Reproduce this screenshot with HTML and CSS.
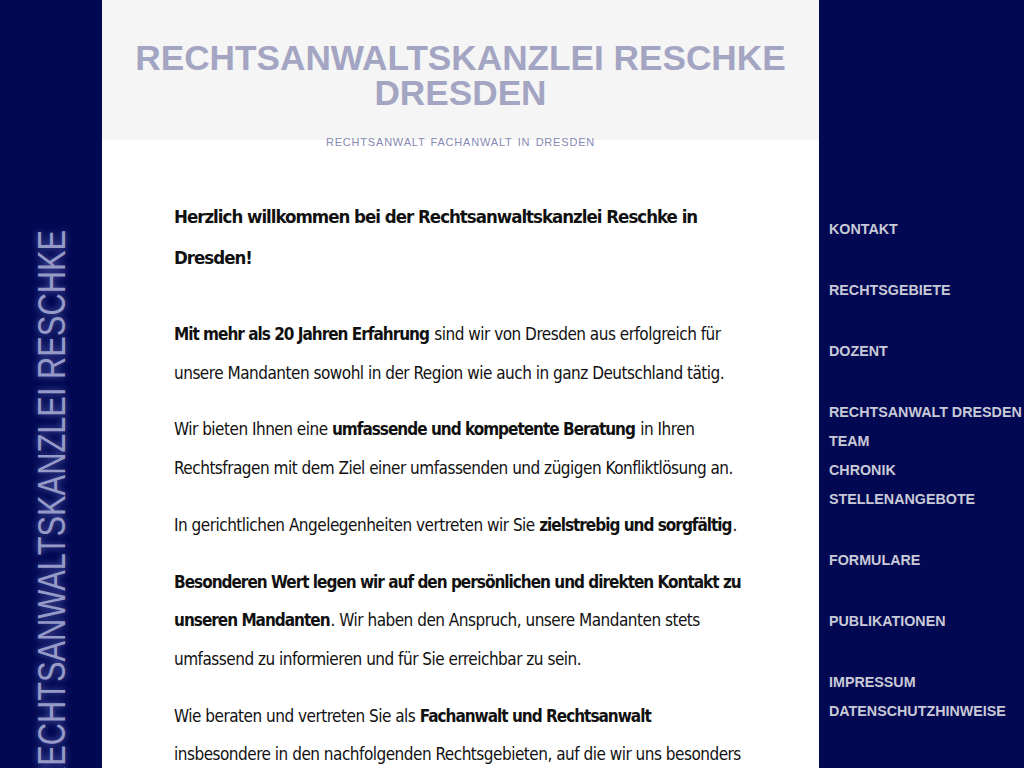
FILE: index.html
```html
<!DOCTYPE html>
<html lang="de">
<head>
<meta charset="utf-8">
<title>Rechtsanwaltskanzlei Reschke Dresden</title>
<link rel="stylesheet" href="styles.css">
</head>
<body>
<div class="page">
  <aside class="side-left">
    <div class="side-title">RECHTSANWALTSKANZLEI RESCHKE</div>
  </aside>
  <main class="center">
    <header class="masthead">
      <h1 class="site-title">RECHTSANWALTSKANZLEI RESCHKE<br>DRESDEN</h1>
    </header>
    <p class="tagline">RECHTSANWALT FACHANWALT IN DRESDEN</p>
    <article class="content">
      <h2 class="welcome">Herzlich willkommen bei der Rechtsanwaltskanzlei Reschke in Dresden!</h2>
      <p><strong>Mit mehr als 20 Jahren Erfahrung</strong> sind wir von Dresden aus erfolgreich für unsere Mandanten sowohl in der Region wie auch in ganz Deutschland tätig.</p>
      <p>Wir bieten Ihnen eine <strong>umfassende und kompetente Beratung</strong> in Ihren Rechtsfragen mit dem Ziel einer umfassenden und zügigen Konfliktlösung an.</p>
      <p>In gerichtlichen Angelegenheiten vertreten wir Sie <strong>zielstrebig und sorgfältig</strong>.</p>
      <p><strong>Besonderen Wert legen wir auf den persönlichen und direkten Kontakt zu unseren Mandanten</strong>. Wir haben den Anspruch, unsere Mandanten stets umfassend zu informieren und für Sie erreichbar zu sein.</p>
      <p>Wie beraten und vertreten Sie als <strong>Fachanwalt und Rechtsanwalt</strong> insbesondere in den nachfolgenden Rechtsgebieten, auf die wir uns besonders spezialisiert haben:</p>
    </article>
  </main>
  <nav class="side-nav">
    <ul class="nav-group"><li>KONTAKT</li></ul>
    <ul class="nav-group"><li>RECHTSGEBIETE</li></ul>
    <ul class="nav-group"><li>DOZENT</li></ul>
    <ul class="nav-group"><li>RECHTSANWALT DRESDEN</li><li>TEAM</li><li>CHRONIK</li><li>STELLENANGEBOTE</li></ul>
    <ul class="nav-group"><li>FORMULARE</li></ul>
    <ul class="nav-group"><li>PUBLIKATIONEN</li></ul>
    <ul class="nav-group"><li>IMPRESSUM</li><li>DATENSCHUTZHINWEISE</li></ul>
  </nav>
</div>
</body>
</html>
```

FILE: styles.css
```css
html, body {
  margin: 0;
  padding: 0;
  height: 100%;
  overflow: hidden;
}
body {
  background: #020852;
  font-family: "Liberation Sans", Arial, sans-serif;
}
.page {
  display: grid;
  grid-template-columns: 102px 717px 1fr;
  height: 100vh;
  overflow: hidden;
}
.side-left {
  padding-top: 230px;
  padding-left: 32px;
  overflow: hidden;
}
.side-title {
  writing-mode: vertical-rl;
  font-family: "Liberation Sans", Arial, sans-serif;
  font-size: 39px;
  line-height: 39px;
  width: 39px;
  white-space: nowrap;
  color: #959ac6;
  text-shadow: 0 0 8px rgba(130, 140, 225, 0.7);
  transform-origin: center top;
  transform: scaleY(0.79) translateY(100%) rotate(180deg);
}
.center {
  background: #ffffff;
  overflow: hidden;
}
.masthead {
  background: #f5f5f5;
  height: 140px;
  display: flex;
  align-items: center;
  justify-content: center;
}
.site-title {
  margin: 0;
  padding-top: 10px;
  text-align: center;
  font-family: "Liberation Sans", Arial, sans-serif;
  font-weight: bold;
  font-size: 35.2px;
  line-height: 35px;
  color: #a3a5c3;
}
.tagline {
  margin: -6px 0 0;
  text-align: center;
  font-family: "Liberation Sans", Arial, sans-serif;
  font-size: 11px;
  line-height: 16px;
  letter-spacing: 0.8px;
  word-spacing: 1.5px;
  color: #8689b3;
}
.content {
  padding: 46px 68px 0 72px;
  font-family: "DejaVu Sans Condensed", "DejaVu Sans", sans-serif;
  font-stretch: condensed;
  font-size: 17px;
  letter-spacing: -0.5px;
  color: #111111;
}
.content strong {
  letter-spacing: -1px;
  padding-right: 1px;
}
.welcome {
  margin: 0 0 37px;
  font-size: 18.5px;
  line-height: 41px;
  font-weight: bold;
  letter-spacing: -1px;
}
.content p {
  margin: 0 0 18px;
  line-height: 38.7px;
}
.side-nav {
  padding-top: 215px;
  padding-left: 10px;
}
.nav-group {
  list-style: none;
  margin: 0 0 32px;
  padding: 0;
}
.nav-group li {
  font-family: "Liberation Sans", Arial, sans-serif;
  font-weight: bold;
  font-size: 14.3px;
  line-height: 29px;
  color: #c9cad8;
  white-space: nowrap;
}
```
